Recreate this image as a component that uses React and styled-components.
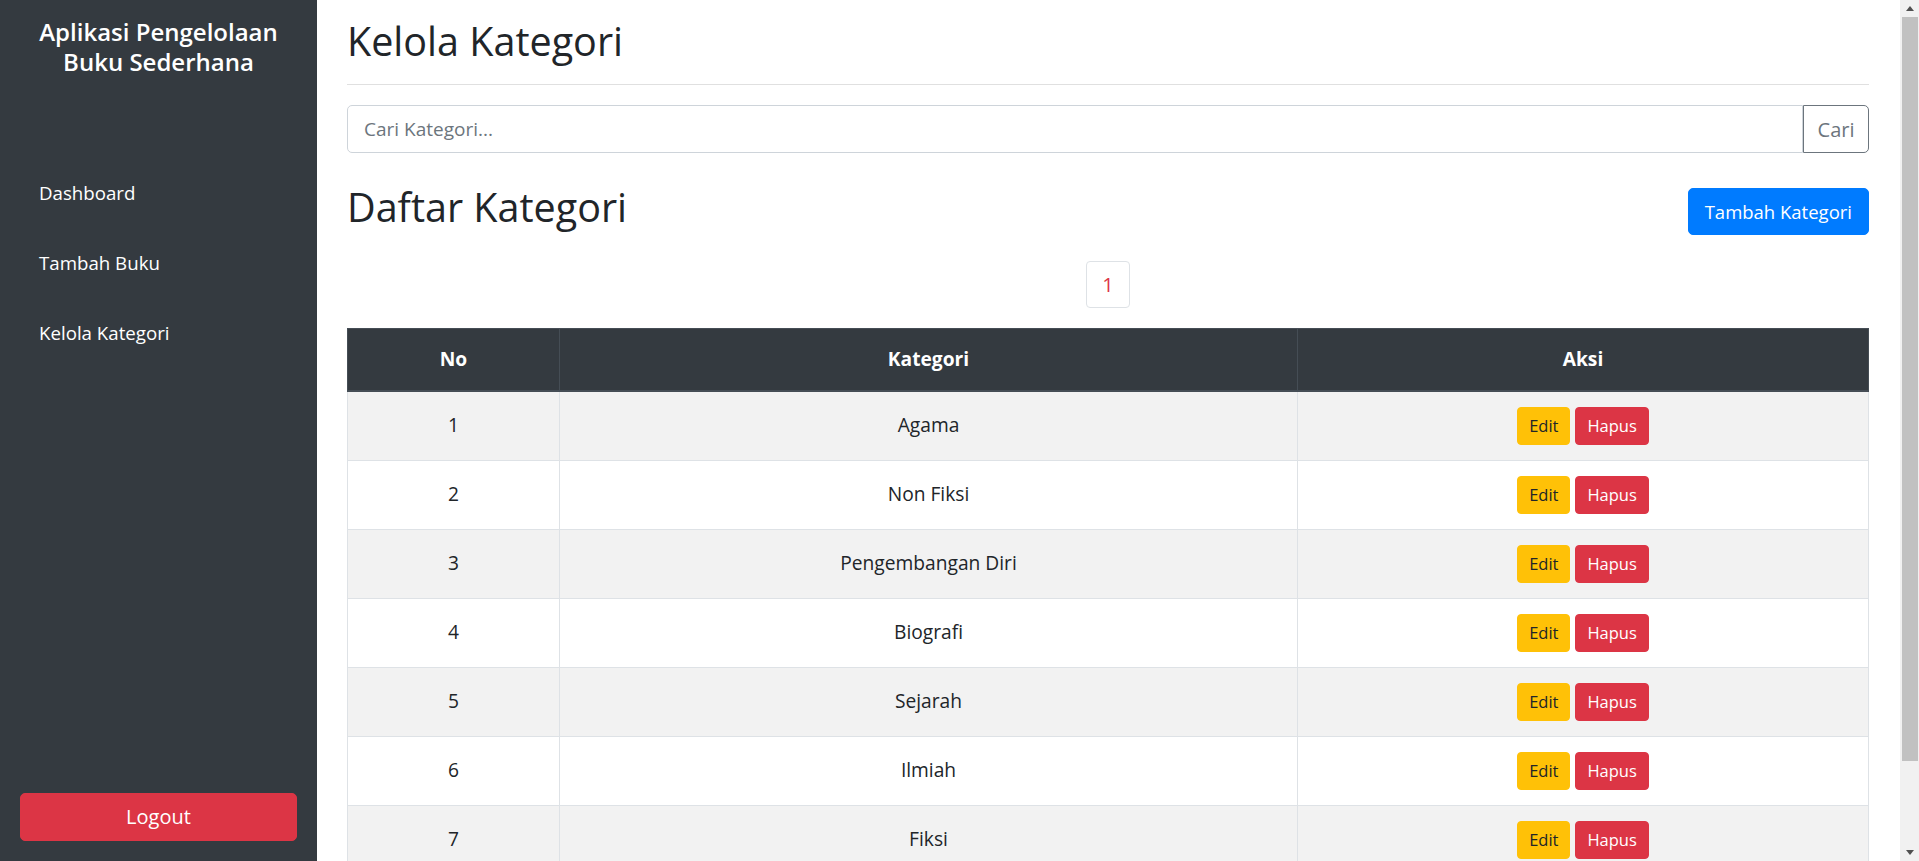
import React from 'react';
import styled, { createGlobalStyle } from 'styled-components';

const GlobalStyle = createGlobalStyle`
  *, *::before, *::after { box-sizing: border-box; }
  html, body { margin: 0; padding: 0; }
  body {
    font-family: "Open Sans", "Noto Sans", "Liberation Sans", sans-serif;
    color: #212529;
    background: #fff;
    font-size: 16px;
    line-height: 1.5;
  }
`;

const Layout = styled.div`
  display: flex;
  align-items: flex-start;
  min-height: 100vh;
`;

const Sidebar = styled.aside`
  position: sticky;
  top: 0;
  flex: 0 0 317px;
  width: 317px;
  height: 100vh;
  background: #343a40;
  color: #fff;
  display: flex;
  flex-direction: column;
  padding: 17px 20px 20px;
`;

const Brand = styled.h4`
  margin: 0;
  font-size: 24px;
  line-height: 30px;
  font-weight: 600;
  text-align: center;
`;

const Nav = styled.nav`
  flex: 1;
  display: flex;
  flex-direction: column;
  gap: 46px;
  padding: 104px 0 0 19px;
`;

const NavLink = styled.a`
  color: #fff;
  text-decoration: none;
  font-size: 18.7px;
  line-height: 24px;
`;

const LogoutButton = styled.button`
  width: 100%;
  height: 48px;
  background: #dc3545;
  color: #fff;
  border: 1px solid #dc3545;
  border-radius: 5px;
  font-family: inherit;
  font-size: 20px;
  line-height: 30px;
`;

const Main = styled.main`
  flex: 1;
  min-width: 0;
  padding: 17px 31px 0 30px;
`;

const ScrollTrack = styled.div`
  position: sticky;
  top: 0;
  flex: 0 0 19px;
  height: 100vh;
  background: #f1f1f1;
  display: flex;
  flex-direction: column;
  align-items: stretch;
`;

const ScrollArrow = styled.div`
  flex: 0 0 17px;
  display: flex;
  align-items: center;
  justify-content: center;
  &::after {
    content: '';
    width: 0;
    height: 0;
    border-left: 4.5px solid transparent;
    border-right: 4.5px solid transparent;
    ${(p) =>
      p.$dir === 'up'
        ? 'border-bottom: 5px solid #505050;'
        : 'border-top: 5px solid #505050;'}
  }
`;

const ScrollThumb = styled.div`
  flex: 0 0 744px;
  margin: 0 1px 0 2px;
  background: #c1c1c1;
`;

const ScrollSpace = styled.div`
  flex: 1;
`;

const PageTitle = styled.h1`
  margin: 0;
  font-size: 39.5px;
  line-height: 48px;
  font-weight: 500;
`;

const Divider = styled.hr`
  margin: 19px 0 20px;
  border: 0;
  border-top: 1px solid rgba(0, 0, 0, 0.12);
`;

const SearchGroup = styled.form`
  display: flex;
  height: 48px;
`;

const SearchInput = styled.input`
  flex: 1;
  min-width: 0;
  border: 1px solid #ced4da;
  border-radius: 5px 0 0 5px;
  padding: 0 16px;
  font-family: inherit;
  font-size: 19px;
  color: #495057;
  outline: none;
  &::placeholder { color: #6c757d; }
`;

const SearchButton = styled.button`
  flex: 0 0 66px;
  border: 1px solid #6c757d;
  background: #fff;
  color: #6c757d;
  border-radius: 0 5px 5px 0;
  font-family: inherit;
  font-size: 20px;
  padding: 0;
`;

const TitleRow = styled.div`
  margin-top: 30px;
  display: flex;
  justify-content: space-between;
  align-items: center;
`;

const SectionTitle = styled.h2`
  margin: 0 0 8px;
  font-size: 39.5px;
  line-height: 48px;
  font-weight: 500;
`;

const AddButton = styled.button`
  height: 47px;
  padding: 0 16px;
  background: #007bff;
  border: 1px solid #007bff;
  color: #fff;
  border-radius: 5px;
  font-family: inherit;
  font-size: 18.5px;
`;

const Pager = styled.div`
  display: flex;
  justify-content: center;
  margin: 22px 0 20px;
`;

const PageItem = styled.a`
  height: 47px;
  padding: 0 15px;
  display: flex;
  align-items: center;
  border: 1px solid #dee2e6;
  border-radius: 4px;
  color: #dc3545;
  font-size: 20px;
  text-decoration: none;
  background: #fff;
`;

const Table = styled.table`
  width: 100%;
  border-collapse: collapse;
  margin-bottom: 16px;
  font-size: 19.2px;
  line-height: 28.8px;
`;

const Th = styled.th`
  width: ${(p) => p.$width || 'auto'};
  background: #343a40;
  color: #fff;
  font-weight: 700;
  padding: 16px;
  border: 1px solid #454d55;
  border-bottom-width: 2px;
  text-align: center;
`;

const Row = styled.tr`
  background: ${(p) => (p.$striped ? '#f2f2f2' : '#fff')};
`;

const Td = styled.td`
  padding: 15px;
  border: 1px solid #dee2e6;
  text-align: center;
  vertical-align: middle;
`;

const Actions = styled.div`
  display: flex;
  justify-content: center;
  gap: 5px;
`;

const ActionButton = styled.button`
  height: 38px;
  padding: 0 11px;
  border-radius: 4px;
  font-family: inherit;
  font-size: 16.5px;
  line-height: 24px;
  border: 1px solid ${(p) => (p.$variant === 'danger' ? '#dc3545' : '#ffc107')};
  background: ${(p) => (p.$variant === 'danger' ? '#dc3545' : '#ffc107')};
  color: ${(p) => (p.$variant === 'danger' ? '#fff' : '#212529')};
`;

const categories = [
  'Agama',
  'Non Fiksi',
  'Pengembangan Diri',
  'Biografi',
  'Sejarah',
  'Ilmiah',
  'Fiksi',
  'Komik',
];

export default function App() {
  return (
    <>
      <GlobalStyle />
      <Layout>
        <Sidebar>
          <Brand>
            Aplikasi Pengelolaan
            <br />
            Buku Sederhana
          </Brand>
          <Nav>
            <NavLink href="#">Dashboard</NavLink>
            <NavLink href="#">Tambah Buku</NavLink>
            <NavLink href="#">Kelola Kategori</NavLink>
          </Nav>
          <LogoutButton type="button">Logout</LogoutButton>
        </Sidebar>
        <Main>
          <PageTitle>Kelola Kategori</PageTitle>
          <Divider />
          <SearchGroup onSubmit={(e) => e.preventDefault()}>
            <SearchInput type="text" placeholder="Cari Kategori..." />
            <SearchButton type="submit">Cari</SearchButton>
          </SearchGroup>
          <TitleRow>
            <SectionTitle>Daftar Kategori</SectionTitle>
            <AddButton type="button">Tambah Kategori</AddButton>
          </TitleRow>
          <Pager>
            <PageItem href="#">1</PageItem>
          </Pager>
          <Table>
            <thead>
              <tr>
                <Th $width="212px">No</Th>
                <Th $width="738px">Kategori</Th>
                <Th>Aksi</Th>
              </tr>
            </thead>
            <tbody>
              {categories.map((name, i) => (
                <Row key={name} $striped={i % 2 === 0}>
                  <Td>{i + 1}</Td>
                  <Td>{name}</Td>
                  <Td>
                    <Actions>
                      <ActionButton type="button" $variant="warning">Edit</ActionButton>
                      <ActionButton type="button" $variant="danger">Hapus</ActionButton>
                    </Actions>
                  </Td>
                </Row>
              ))}
            </tbody>
          </Table>
        </Main>
        <ScrollTrack aria-hidden="true">
          <ScrollArrow $dir="up" />
          <ScrollThumb />
          <ScrollSpace />
          <ScrollArrow $dir="down" />
        </ScrollTrack>
      </Layout>
    </>
  );
}
